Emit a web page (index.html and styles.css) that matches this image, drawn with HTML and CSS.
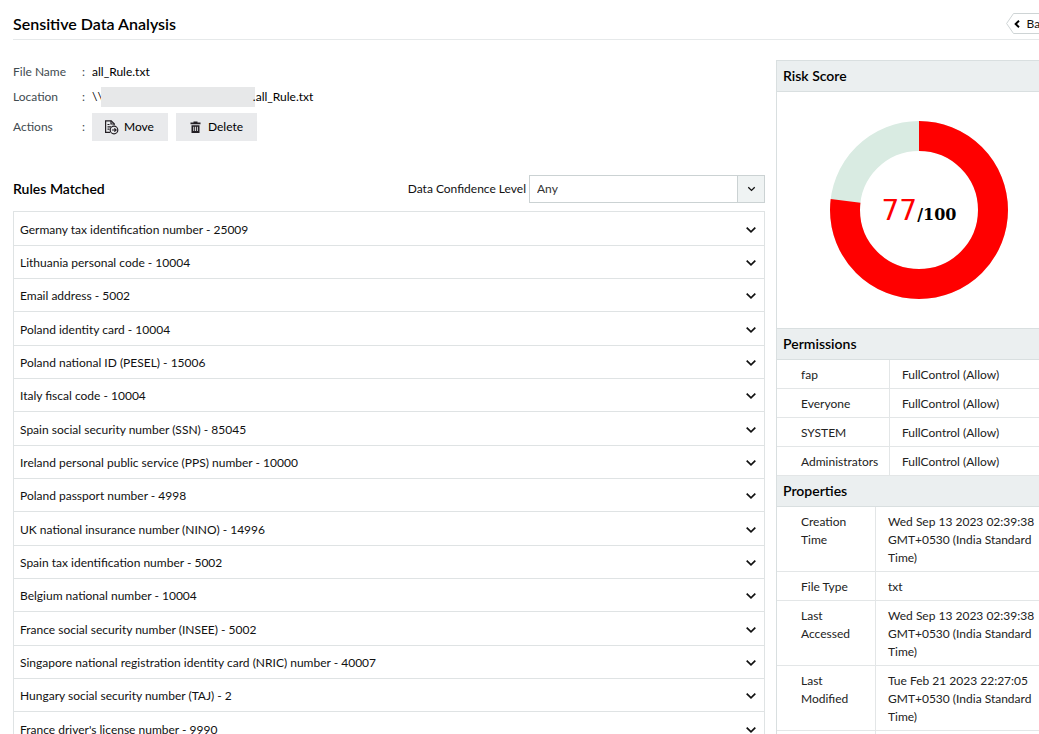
FILE: index.html
```html
<!DOCTYPE html>
<html lang="en">
<head>
    <meta charset="UTF-8">
    <meta name="viewport" content="width=device-width, initial-scale=1.0">
    <title>Sensitive Data Analysis</title>
    <link rel="stylesheet" href="styles.css">
</head>
<body>
    <svg class="sprite" aria-hidden="true">
        <symbol id="chevron" viewBox="0 0 12 8">
            <path d="M1.7 1.6 6 5.9l4.3-4.3" fill="none" stroke="currentColor" stroke-width="1.7"/>
        </symbol>
    </svg>

    <div class="page">
        <header class="page-header">
            <h1>Sensitive Data Analysis</h1>
            <button type="button" class="back-button">
                <svg class="back-point" viewBox="0 0 8 21"><path d="M8 .5h-.5L.6 10.5l6.9 10H8" fill="#fff" stroke="#ced4d5"/></svg>
                <span class="back-body">
                    <svg width="6" height="8" viewBox="0 0 6 8"><path d="M5 .7 1.6 4 5 7.3" fill="none" stroke="#000" stroke-width="1.9"/></svg>
                    Back
                </span>
            </button>
        </header>

        <div class="columns">
            <main class="content">
                <dl class="file-info">
                    <dt>File Name</dt>
                    <dd>all_Rule.txt</dd>
                    <dt>Location</dt>
                    <dd>\\<span class="masked"></span>.all_Rule.txt</dd>
                    <dt class="actions-label">Actions</dt>
                    <dd class="actions">
                        <button type="button" class="action-button">
                            <svg width="15" height="15" viewBox="0 0 15 15" fill="none" stroke="#231f24" stroke-width="1.2">
                                <path d="M6 12.4H1.600V.8h5.600l3 3v1.400"/>
                                <path d="M7 .8v3.200h3.200M3.500 4.500h2M3.500 6.800h3.500M3.500 9.200h2"/>
                                <circle cx="10" cy="10" r="3.800"/>
                                <path d="M8 10h4M10.400 8.300 12.100 10l-1.700 1.700"/>
                            </svg>
                            Move
                        </button>
                        <button type="button" class="action-button">
                            <svg width="15" height="15" viewBox="0 0 15 15" fill="#231f24">
                                <path d="M5.500 1.500h4v1h3v1.700h-10V2.500h3z"/>
                                <path fill-rule="evenodd" d="M3.500 5.200h8V13h-8zM5.300 6.700v4.300h.9V6.700zM7.100 6.700v4.300h.9V6.700zM8.900 6.700v4.300h.9V6.700z"/>
                            </svg>
                            Delete
                        </button>
                    </dd>
                </dl>

                <div class="rules-header">
                    <h2>Rules Matched</h2>
                    <label for="confidence">Data Confidence Level</label>
                    <div class="select-box">
                        <select id="confidence">
                            <option>Any</option>
                            <option>High</option>
                            <option>Medium</option>
                            <option>Low</option>
                        </select>
                        <span class="select-arrow"><svg width="9" height="6"><use href="#chevron"/></svg></span>
                    </div>
                </div>

                <ul class="rules">
                    <li><button type="button">Germany tax identification number - 25009 <svg width="12" height="8"><use href="#chevron"/></svg></button></li>
                    <li><button type="button">Lithuania personal code - 10004 <svg width="12" height="8"><use href="#chevron"/></svg></button></li>
                    <li><button type="button">Email address - 5002 <svg width="12" height="8"><use href="#chevron"/></svg></button></li>
                    <li><button type="button">Poland identity card - 10004 <svg width="12" height="8"><use href="#chevron"/></svg></button></li>
                    <li><button type="button">Poland national ID (PESEL) - 15006 <svg width="12" height="8"><use href="#chevron"/></svg></button></li>
                    <li><button type="button">Italy fiscal code - 10004 <svg width="12" height="8"><use href="#chevron"/></svg></button></li>
                    <li><button type="button">Spain social security number (SSN) - 85045 <svg width="12" height="8"><use href="#chevron"/></svg></button></li>
                    <li><button type="button">Ireland personal public service (PPS) number - 10000 <svg width="12" height="8"><use href="#chevron"/></svg></button></li>
                    <li><button type="button">Poland passport number - 4998 <svg width="12" height="8"><use href="#chevron"/></svg></button></li>
                    <li><button type="button">UK national insurance number (NINO) - 14996 <svg width="12" height="8"><use href="#chevron"/></svg></button></li>
                    <li><button type="button">Spain tax identification number - 5002 <svg width="12" height="8"><use href="#chevron"/></svg></button></li>
                    <li><button type="button">Belgium national number - 10004 <svg width="12" height="8"><use href="#chevron"/></svg></button></li>
                    <li><button type="button">France social security number (INSEE) - 5002 <svg width="12" height="8"><use href="#chevron"/></svg></button></li>
                    <li><button type="button">Singapore national registration identity card (NRIC) number - 40007 <svg width="12" height="8"><use href="#chevron"/></svg></button></li>
                    <li><button type="button">Hungary social security number (TAJ) - 2 <svg width="12" height="8"><use href="#chevron"/></svg></button></li>
                    <li><button type="button">France driver's license number - 9990 <svg width="12" height="8"><use href="#chevron"/></svg></button></li>
                </ul>
            </main>

            <aside class="sidebar">
                <h2>Risk Score</h2>
                <div class="score">
                    <svg width="178" height="178" viewBox="0 0 178 178" fill="none" stroke-width="30">
                        <circle cx="89" cy="89" r="74" stroke="#d9ebe2"/>
                        <circle cx="89" cy="89" r="74" stroke="#f00" pathLength="100" stroke-dasharray="77 100" transform="rotate(-90 89 89)"/>
                    </svg>
                    <div class="score-text"><span class="score-value">77</span><span class="score-max">/100</span></div>
                </div>

                <h2>Permissions</h2>
                <table class="permissions">
                    <tr><th scope="row">fap</th><td>FullControl (Allow)</td></tr>
                    <tr><th scope="row">Everyone</th><td>FullControl (Allow)</td></tr>
                    <tr><th scope="row">SYSTEM</th><td>FullControl (Allow)</td></tr>
                    <tr><th scope="row">Administrators</th><td>FullControl (Allow)</td></tr>
                </table>

                <h2>Properties</h2>
                <table class="properties">
                    <tr><th scope="row">Creation Time</th><td>Wed Sep 13 2023 02:39:38 GMT+0530 (India Standard Time)</td></tr>
                    <tr><th scope="row">File Type</th><td>txt</td></tr>
                    <tr><th scope="row">Last Accessed</th><td>Wed Sep 13 2023 02:39:38 GMT+0530 (India Standard Time)</td></tr>
                    <tr><th scope="row">Last Modified</th><td>Tue Feb 21 2023 22:27:05 GMT+0530 (India Standard Time)</td></tr>
                    <tr><th scope="row"></th><td></td></tr>
                </table>
            </aside>
        </div>
    </div>
</body>
</html>
```
FILE: styles.css
```css
* {
    box-sizing: border-box;
}
body {
    margin: 0;
    height: 100vh;
    overflow: hidden;
    font-family: Lato, "Liberation Sans", sans-serif;
    font-size: 12px;
    line-height: 18px;
    color: #111;
    background: #fff;
}
h1, h2, dl, dd, ul {
    margin: 0;
    padding: 0;
}
button, select {
    font: inherit;
    color: inherit;
    border: 0;
    background: none;
    padding: 0;
    cursor: pointer;
}
svg {
    display: block;
    flex: none;
}
.sprite {
    display: none;
}

/* the page runs a little wider than the window */
.page {
    margin-right: -30px;
    padding-left: 13px;
}
.page-header {
    display: flex;
    justify-content: space-between;
    align-items: center;
    height: 40px;
    padding-top: 8px;
    border-bottom: 1px solid #e6e9ea;
}
h1 {
    font-size: 16px;
    font-weight: 600;
    color: #000;
}
h2 {
    font-size: 14px;
    font-weight: 600;
    color: #000;
}
.back-button {
    display: flex;
    margin-right: 8px;
}
.back-point {
    width: 8px;
    height: 21px;
}
.back-body {
    display: flex;
    align-items: center;
    gap: 7px;
    height: 21px;
    padding-right: 8px;
    border: 1px solid #ced4d5;
    border-left: 0;
}

.columns {
    display: flex;
    align-items: flex-start;
    gap: 11px;
    padding-top: 20px;
}
.content {
    flex: 1;
}

.file-info {
    display: grid;
    grid-template-columns: 79px 1fr;
    row-gap: 7px;
    padding-top: 3px;
}
dt {
    display: flex;
    justify-content: space-between;
    padding-right: 7px;
    color: #3f4b50;
}
dt::after {
    content: ":";
}
dd {
    display: flex;
    color: #000;
}
.actions-label {
    align-items: center;
}
.actions {
    gap: 8px;
}
.masked {
    width: 154px;
    height: 20px;
    margin: -1px -2px;
    background: #e7e8e9;
}
.action-button {
    display: flex;
    align-items: center;
    gap: 5px;
    height: 28px;
    padding: 0 14px 0 12px;
    background: #e9eaec;
    color: #000;
}

.rules-header {
    display: flex;
    align-items: center;
    padding-top: 34px;
}
.rules-header h2 {
    flex: 1;
}
.select-box {
    position: relative;
    width: 236px;
    margin-left: 3px;
}
.select-box select {
    display: block;
    appearance: none;
    width: 100%;
    height: 28px;
    padding-left: 7px;
    border: 1px solid #cbd2d3;
    background: #fff;
    color: #333;
}
.select-arrow {
    position: absolute;
    top: 1px;
    right: 1px;
    bottom: 1px;
    width: 27px;
    display: flex;
    align-items: center;
    justify-content: center;
    border-left: 1px solid #cbd2d3;
    background: #eff3f3;
    pointer-events: none;
}

.rules {
    list-style: none;
    margin-top: 8px;
    border: 1px solid #dfe3e4;
}
.rules li {
    border-bottom: 1px solid #dfe3e4;
}
.rules button {
    display: flex;
    justify-content: space-between;
    align-items: center;
    width: 100%;
    height: 32px;
    padding: 2px 7px 0 6px;
    text-align: left;
}
.rules li:nth-child(3n + 1) button {
    height: 33px;
}

.sidebar {
    width: 293px;
    border: 1px solid #d9dfe0;
}
.sidebar h2 {
    height: 31px;
    padding-left: 6px;
    line-height: 30px;
    background: #ebeff0;
    border-bottom: 1px solid #d9dfe0;
}
.score {
    display: grid;
    justify-items: start;
    align-items: center;
    padding: 29px 0 29px 53px;
    border-bottom: 1px solid #d9dfe0;
}
.score > * {
    grid-area: 1 / 1;
}
.score-text {
    width: 178px;
    padding-top: 6px;
    text-align: center;
    color: #000;
}
.score-value {
    font-family: "DejaVu Sans", sans-serif;
    font-size: 28px;
    color: #f00;
}
.score-max {
    font-family: "DejaVu Serif", serif;
    font-size: 16px;
    font-weight: bold;
}

table {
    width: 100%;
    table-layout: fixed;
    border-collapse: separate;
    border-spacing: 0;
    color: #222;
}
th, td {
    height: 29px;
    padding: 6px 12px 4px;
    border-bottom: 1px solid #e3e6e7;
    font-weight: normal;
    text-align: left;
    vertical-align: top;
}
th {
    padding-left: 24px;
    border-right: 1px solid #e3e6e7;
}
.permissions th {
    width: 113px;
}
.properties th {
    width: 99px;
}
```
